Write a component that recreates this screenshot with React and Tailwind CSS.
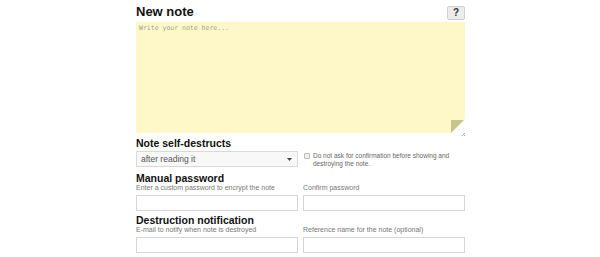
const font = { fontFamily: '"Liberation Sans", Arial, sans-serif' }

const Field = ({ label }) => (
  <div className="flex flex-col">
    <label className="text-[7px] leading-[8px] text-[#777] mb-[3px]">{label}</label>
    <input type="text" className="h-[16px] w-full border border-[#d6d6d6] bg-white outline-none" />
  </div>
)

export default function App() {
  return (
    <div className="w-[600px] h-[257px] bg-white overflow-hidden" style={font}>
      <div className="w-[329px] ml-[136px] pt-[4px]">
        <div className="flex items-start justify-between">
          <h1 className="text-[13px] leading-[15px] font-bold text-[#111]">New note</h1>
          <button className="mt-[2px] w-[18px] h-[14px] flex items-center justify-center bg-[#ececec] border border-[#cfcfcf] rounded-[2px] text-[10px] font-bold text-[#333] leading-none">
            ?
          </button>
        </div>

        <div className="relative mt-[2px] h-[111px] bg-[#fef8c9]">
          <textarea
            placeholder="Write your note here..."
            className="w-full h-full resize-none bg-transparent outline-none px-[3px] py-[2px] text-[6.5px] leading-[9px] text-[#666] placeholder:text-[#a3a38a]"
            style={{ fontFamily: '"DejaVu Sans Mono", "Liberation Mono", monospace' }}
          />
          <svg className="absolute right-0 bottom-0" width="14" height="14" viewBox="0 0 14 14">
            <polygon points="0,14 14,0 14,14" fill="#ffffff" />
            <polygon points="0,14 0,1 13,1" fill="#c9c48c" />
          </svg>
          <svg className="absolute -right-[1px] -bottom-[4px]" width="5" height="5" viewBox="0 0 5 5">
            <path d="M1 4 L4 1 M3 4 L4 3" stroke="#999" strokeWidth="0.8" />
          </svg>
        </div>

        <h2 className="mt-[5px] text-[10.5px] leading-[10px] font-bold text-[#111]">Note self-destructs</h2>
        <div className="mt-[3px] h-[16px] flex gap-[6px]">
          <div className="w-[162px] h-[16px] flex items-center justify-between border border-[#d9d9d9] bg-[#f8f8f8] pl-[4px] pr-[5px]">
            <span className="text-[8.5px] text-[#555]">after reading it</span>
            <svg width="5" height="3" viewBox="0 0 5 3">
              <polygon points="0,0 5,0 2.5,3" fill="#444" />
            </svg>
          </div>
          <div className="flex-1 flex items-start gap-[3px] pt-[1px]">
            <span className="mt-[1px] w-[6px] h-[6px] shrink-0 border border-[#bbb] bg-[#f0f0f0] rounded-[1px]" />
            <p className="text-[6.5px] leading-[8px] text-[#666] w-[145px]">
              Do not ask for confirmation before showing and destroying the note.
            </p>
          </div>
        </div>

        <h2 className="mt-[6px] text-[10.5px] leading-[10px] font-bold text-[#111]">Manual password</h2>
        <div className="mt-[1px] grid grid-cols-2 gap-[5px]">
          <Field label="Enter a custom password to encrypt the note" />
          <Field label="Confirm password" />
        </div>

        <h2 className="mt-[4px] text-[10.5px] leading-[10px] font-bold text-[#111]">Destruction notification</h2>
        <div className="mt-[1px] grid grid-cols-2 gap-[5px]">
          <Field label="E-mail to notify when note is destroyed" />
          <Field label="Reference name for the note (optional)" />
        </div>
      </div>
    </div>
  )
}
